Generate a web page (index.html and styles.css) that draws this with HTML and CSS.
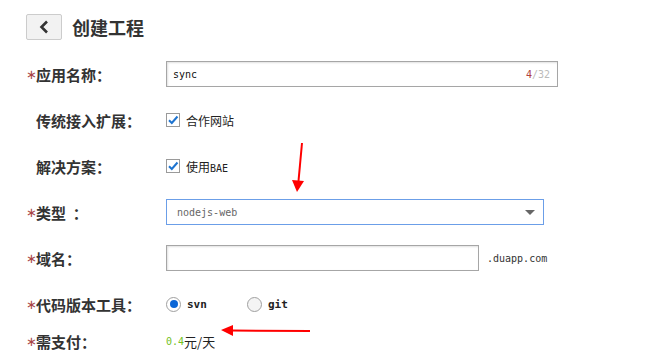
FILE: index.html
```html
<!DOCTYPE html>
<html lang="zh-CN">
<head>
  <meta charset="UTF-8">
  <title>创建工程</title>
  <link rel="stylesheet" href="styles.css">
</head>
<body>

<div class="header">
  <button class="back">
    <svg width="12" height="14" viewBox="0 0 12 14"><path d="M9 1.5 L3.5 7 L9 12.5" fill="none" stroke="#333" stroke-width="2.6"/></svg>
  </button>
  <h1>创建工程</h1>
</div>

<div class="form">
  <div class="row">
    <div class="label"><span class="star">∗</span>应用名称：</div>
    <div class="field">
      <div class="input wide">
        <span class="value">sync</span>
        <span class="count"><em>4</em>/32</span>
      </div>
    </div>
  </div>

  <div class="row">
    <div class="label"><span class="star"></span>传统接入扩展：</div>
    <div class="field">
      <span class="check"><svg width="12" height="12" viewBox="0 0 12 12"><path d="M2 6.2 L4.8 9 L10.5 2.5" fill="none" stroke="#1e74d0" stroke-width="2"/></svg></span>
      <span class="text">合作网站</span>
    </div>
  </div>

  <div class="row">
    <div class="label"><span class="star"></span>解决方案：</div>
    <div class="field">
      <span class="check"><svg width="12" height="12" viewBox="0 0 12 12"><path d="M2 6.2 L4.8 9 L10.5 2.5" fill="none" stroke="#1e74d0" stroke-width="2"/></svg></span>
      <span class="text">使用<span class="mono">BAE</span></span>
    </div>
  </div>

  <div class="row">
    <div class="label"><span class="star">∗</span>类型&nbsp;&nbsp;：</div>
    <div class="field">
      <div class="select">
        <span class="value">nodejs-web</span>
        <span class="caret"></span>
      </div>
    </div>
  </div>

  <div class="row">
    <div class="label"><span class="star">∗</span>域名：</div>
    <div class="field">
      <div class="input domain"></div>
      <span class="suffix">.duapp.com</span>
    </div>
  </div>

  <div class="row">
    <div class="label"><span class="star">∗</span>代码版本工具：</div>
    <div class="field">
      <span class="radio on"></span><span class="opt">svn</span>
      <span class="radio"></span><span class="opt">git</span>
    </div>
  </div>

  <div class="row last">
    <div class="label"><span class="star">∗</span>需支付：</div>
    <div class="field">
      <span class="price">0.4</span><span class="text unit">元/天</span>
    </div>
  </div>
</div>

<svg class="marks" width="658" height="364">
  <line x1="302" y1="143" x2="298.5" y2="181" stroke="#f00" stroke-width="2"/>
  <polygon points="292,180 304,181 297,192" fill="#f00"/>
  <line x1="310" y1="331" x2="232" y2="330.5" stroke="#f00" stroke-width="2"/>
  <polygon points="233,325 233,336 221,330" fill="#f00"/>
</svg>

</body>
</html>
```

FILE: styles.css
```css
body {
  margin: 0;
  padding: 14px 0 0 26px;
  font-family: "Noto Sans CJK SC", "Liberation Sans", sans-serif;
  color: #333;
  background: #fff;
  position: relative;
  width: 632px;
  height: 350px;
  overflow: hidden;
}
.header {
  display: flex;
  align-items: center;
  height: 26px;
}
.back {
  width: 36px;
  height: 26px;
  padding: 0;
  background: #f2f2f2;
  border: 1px solid #ccc;
  border-radius: 2px;
  display: flex;
  align-items: center;
  justify-content: center;
}
h1 {
  margin: 0 0 0 10px;
  font-size: 18px;
  font-weight: bold;
  color: #333;
  line-height: 26px;
}
.form {
  margin-top: 11px;
}
.row {
  display: flex;
  align-items: center;
  height: 46px;
}
.row.last {
  height: 28px;
}
.label {
  width: 140px;
  font-size: 15px;
  font-weight: bold;
  color: #333;
  display: flex;
  align-items: center;
}
.star {
  display: inline-block;
  width: 10px;
  color: #a84444;
  font-family: "DejaVu Sans", sans-serif;
  font-size: 13px;
  font-weight: normal;
}
.field {
  display: flex;
  align-items: center;
}
.input, .select {
  box-sizing: border-box;
  height: 26px;
  display: flex;
  align-items: center;
  justify-content: space-between;
  font-family: "DejaVu Sans Mono", monospace;
  font-size: 10px;
}
.input {
  border: 1px solid #a6a6a6;
  box-shadow: inset 1px 1px 2px rgba(0,0,0,0.12);
  padding: 0 7px 0 6px;
}
.input.wide {
  width: 392px;
}
.input.domain {
  width: 313px;
}
.input .value {
  color: #111;
}
.count {
  color: #bbb;
}
.count em {
  font-style: normal;
  color: #b04040;
}
.select {
  width: 378px;
  border: 1px solid #6b9ee8;
  padding: 0 8px 0 10px;
  color: #666;
}
.caret {
  width: 0;
  height: 0;
  border-left: 5px solid transparent;
  border-right: 5px solid transparent;
  border-top: 5px solid #666;
}
.suffix {
  margin-left: 8px;
  font-family: "DejaVu Sans Mono", monospace;
  font-size: 10px;
  color: #333;
}
.check {
  box-sizing: border-box;
  width: 14px;
  height: 14px;
  border: 1px solid #9a9a9a;
  background: #fff;
  display: flex;
  align-items: center;
  justify-content: center;
}
.text {
  margin-left: 6px;
  font-size: 12px;
  color: #222;
}
.mono {
  font-family: "DejaVu Sans Mono", monospace;
  font-size: 10px;
}
.radio {
  box-sizing: border-box;
  width: 15px;
  height: 15px;
  border: 1px solid #a0a0a0;
  border-radius: 50%;
  background: #f4f4f4;
  display: flex;
  align-items: center;
  justify-content: center;
}
.radio.on {
  background: #fff;
}
.radio.on::after {
  content: "";
  width: 8px;
  height: 8px;
  border-radius: 50%;
  background: #0b66d6;
}
.opt {
  margin-left: 6px;
  width: 60px;
  font-family: "DejaVu Sans Mono", monospace;
  font-size: 11px;
  font-weight: bold;
  color: #222;
}
.price {
  font-family: "DejaVu Sans Mono", monospace;
  font-size: 10px;
  color: #73c11e;
}
.text.unit {
  margin-left: 0;
  font-size: 13px;
}
.marks {
  position: absolute;
  left: 0;
  top: 0;
  pointer-events: none;
}
```
